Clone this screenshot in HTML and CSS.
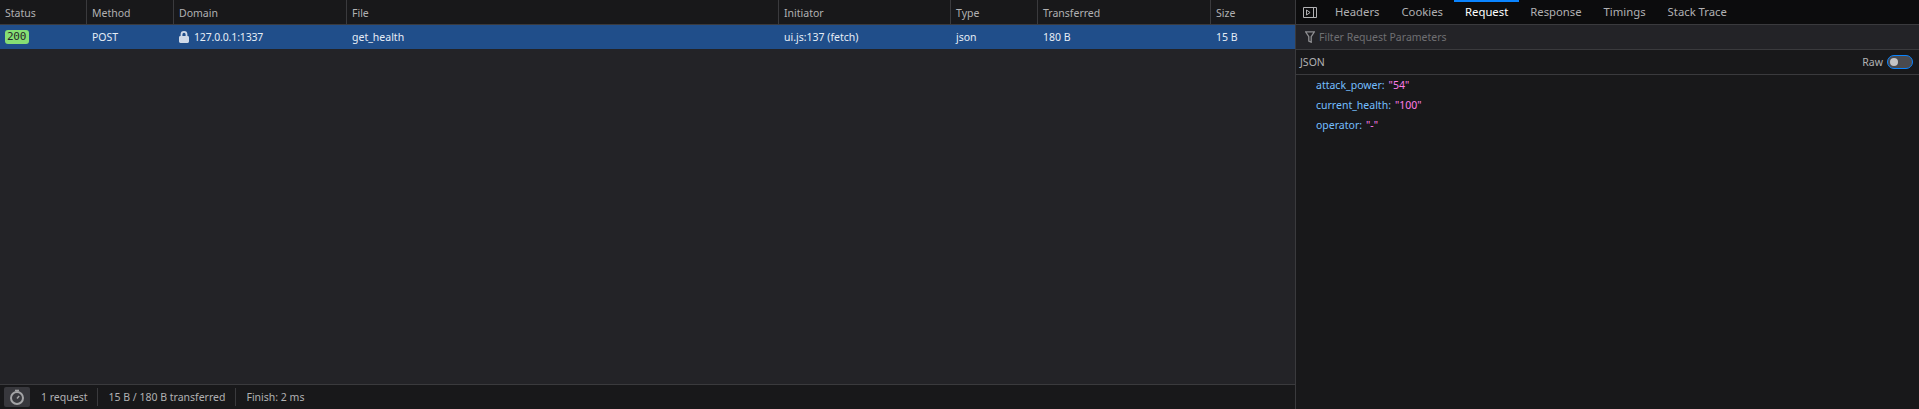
FILE: index.html
```html
<!DOCTYPE html>
<html lang="en">
<head>
<meta charset="utf-8">
<title>Network</title>
<link rel="stylesheet" href="styles.css">
</head>
<body>
<div class="app">
  <main class="list">
    <div class="row head">
      <div class="cell">Status</div>
      <div class="cell">Method</div>
      <div class="cell">Domain</div>
      <div class="cell">File</div>
      <div class="cell">Initiator</div>
      <div class="cell">Type</div>
      <div class="cell">Transferred</div>
      <div class="cell">Size</div>
    </div>
    <div class="row sel">
      <div class="cell"><span class="badge">200</span></div>
      <div class="cell">POST</div>
      <div class="cell"><svg class="lock" width="10" height="12" viewBox="0 0 10 12"><path d="M1.6 5V3.4a3.4 3.4 0 0 1 6.8 0V5h.2A1.4 1.4 0 0 1 10 6.4v4.2A1.4 1.4 0 0 1 8.6 12H1.4A1.4 1.4 0 0 1 0 10.6V6.4A1.4 1.4 0 0 1 1.4 5zM3.4 5h3.2V3.4a1.6 1.6 0 0 0-3.2 0z" fill="#cfd9e8" fill-rule="evenodd"/></svg><span class="addr">127.0.0.1:1337</span></div>
      <div class="cell">get_health</div>
      <div class="cell">ui.js:137 (fetch)</div>
      <div class="cell">json</div>
      <div class="cell">180 B</div>
      <div class="cell">15 B</div>
    </div>
    <div class="empty"></div>
    <footer class="status">
      <div class="timer"><svg width="16" height="16" viewBox="0 0 16 16" fill="none" stroke="#a4a4a6"><circle cx="8" cy="9" r="6" stroke-width="2"/><path d="M8 9.5l2.2-2.6" stroke-width="1.5"/><path d="M6 1.5h4" stroke-width="1.6"/></svg></div>
      <span class="stat">1 request</span>
      <span class="stat">15 B / 180 B transferred</span>
      <span class="stat">Finish: 2 ms</span>
    </footer>
  </main>
  <aside class="side">
    <nav class="tabs">
      <svg class="toggle" width="14" height="11" viewBox="0 0 14 11" fill="none" stroke="#b1b1b3"><path d="M.5.5h13v10H.5zM10.5.5v10"/><path d="M3.5 3l3.6 2.5-3.6 2.5z"/></svg>
      <span class="tab">Headers</span>
      <span class="tab">Cookies</span>
      <span class="tab on">Request</span>
      <span class="tab">Response</span>
      <span class="tab">Timings</span>
      <span class="tab">Stack Trace</span>
    </nav>
    <div class="filter">
      <svg width="10" height="12" viewBox="0 0 10 12" fill="none" stroke="#8f8f92" stroke-width="1.3"><path d="M.6.8h8.8L6.2 5.6V11.2L3.8 10V5.6z"/></svg>
      <span>Filter Request Parameters</span>
    </div>
    <div class="jsonbar">
      <span>JSON</span>
      <span class="raw">Raw<span class="switch"><span class="knob"></span></span></span>
    </div>
    <div class="props">
      <div class="prop"><span class="key">attack_power:</span><span class="val">"54"</span></div>
      <div class="prop"><span class="key">current_health:</span><span class="val">"100"</span></div>
      <div class="prop"><span class="key">operator:</span><span class="val">"-"</span></div>
    </div>
  </aside>
</div>
</body>
</html>
```
FILE: styles.css
```css
* { box-sizing: border-box; }
html, body { margin: 0; height: 100%; }
body {
  background: #232327;
  color: #d7d7db;
  font: 10.5px/16px "Noto Sans", "Open Sans", sans-serif;
  overflow: hidden;
}
.app { display: flex; height: 409px; }
.list { width: 1295px; display: flex; flex-direction: column; }
.row {
  display: grid;
  grid-template-columns: 87px 87px 173px 432px 172px 87px 173px 84px;
  align-items: center;
}
.head {
  height: 25px;
  background: #18181a;
  border-bottom: 1px solid #3a3a3d;
  color: #b1b1b3;
}
.head .cell { height: 24px; padding-top: 1px; border-right: 1px solid #3a3a3d; }
.head .cell:last-child { border-right: 0; }
.cell { padding-left: 5px; white-space: nowrap; display: flex; align-items: center; }
.sel { height: 24px; background: #204e8a; color: #e6edf6; }
.addr { letter-spacing: -.15px; }
.badge {
  background: #86de74;
  color: #28282a;
  border-radius: 3px;
  font: 11px/14px "DejaVu Sans Mono", monospace;
  padding: 0 2px;
  width: 24px;
  height: 14px;
  letter-spacing: -.3px;
}
.lock { margin-right: 5px; }
.empty { flex: 1; }
.status {
  height: 25px;
  background: #18181a;
  border-top: 1px solid #3a3a3d;
  display: flex;
  align-items: center;
  padding-left: 4px;
  color: #b1b1b3;
}
.timer {
  width: 26px;
  height: 20px;
  background: #38383d;
  border-radius: 2px;
  display: flex;
  align-items: center;
  justify-content: center;
  margin-right: 11px;
}
.stat { padding-right: 10px; margin-right: 10px; border-right: 1px solid #3a3a3d; line-height: 18px; }
.stat:last-child { border-right: 0; }
.side {
  flex: 1;
  background: #18181a;
  border-left: 1px solid #3a3a3d;
  display: flex;
  flex-direction: column;
}
.tabs {
  height: 25px;
  background: #0c0c0d;
  border-bottom: 1px solid #3a3a3d;
  display: flex;
  align-items: flex-start;
  color: #b1b1b3;
  padding-left: 7px;
  font-size: 11.3px;
}
.toggle { margin: 7px 7px 0 0; }
.tab { padding: 2px 11px 0; height: 24px; line-height: 20px; white-space: nowrap; }
.tab.on { color: #fff; border-top: 2px solid #0a84ff; padding-top: 0; }
.filter {
  height: 25px;
  background: #232327;
  border-bottom: 1px solid #3a3a3d;
  display: flex;
  align-items: center;
  gap: 4px;
  padding-left: 9px;
  color: #6f6f72;
}
.jsonbar {
  height: 25px;
  border-bottom: 1px solid #3a3a3d;
  display: flex;
  align-items: center;
  justify-content: space-between;
  padding: 0 6px 0 4px;
  color: #b1b1b3;
}
.raw { display: flex; align-items: center; gap: 4px; }
.switch {
  width: 26px;
  height: 14px;
  border: 1.5px solid #0a84ff;
  border-radius: 7px;
  background: #4a4a4f;
  display: flex;
  align-items: center;
  padding-left: 1.5px;
}
.knob { width: 8px; height: 8px; border-radius: 50%; background: #c4c4c6; }
.prop { height: 20px; line-height: 20px; padding-left: 20px; display: flex; gap: 4px; }
.key { color: #75bfff; }
.val { color: #ff7de9; }
```
